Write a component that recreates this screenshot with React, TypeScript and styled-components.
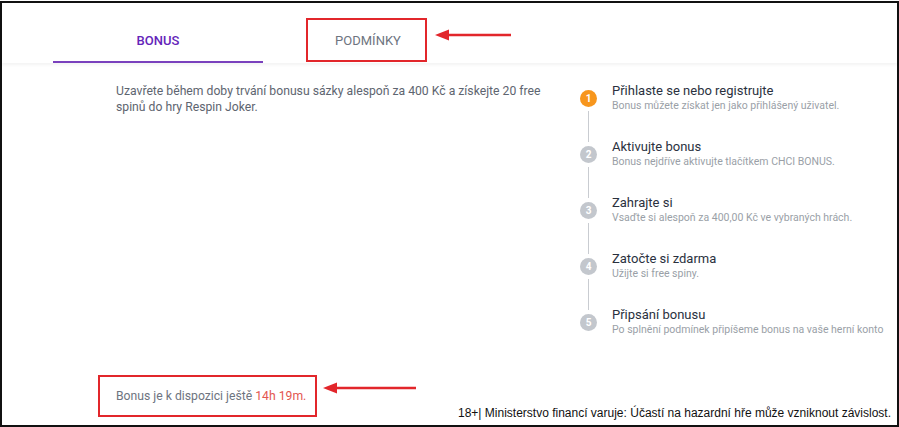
import React from 'react';
import styled, { createGlobalStyle } from 'styled-components';

const GlobalStyle = createGlobalStyle`
  html, body {
    margin: 0;
    padding: 0;
    background: #ffffff;
  }
  body {
    font-family: Roboto, "Noto Sans", Arial, sans-serif;
  }
`;

const RED = '#e2262b';

const Frame = styled.div`
  position: relative;
  box-sizing: border-box;
  width: 899px;
  height: 426px;
  margin-top: 1px;
  border: 2px solid #111;
  background: #fff;
  display: flex;
  flex-direction: column;
`;

const Header = styled.div`
  position: relative;
  z-index: 1;
  display: flex;
  height: 60px;
  padding-left: 51px;
  background: #fff;
  box-shadow: 0 2px 3px rgba(0, 0, 0, 0.05);
`;

const Tab = styled.div<{ $active?: boolean }>`
  box-sizing: border-box;
  width: 210px;
  display: flex;
  align-items: flex-end;
  justify-content: center;
  padding-bottom: 12px;
  font-size: 13px;
  line-height: 16px;
  font-weight: ${(p) => (p.$active ? 500 : 400)};
  text-transform: uppercase;
  color: ${(p) => (p.$active ? '#6424b9' : '#6e7480')};
  border-bottom: 2px solid ${(p) => (p.$active ? '#7a41bd' : 'transparent')};
`;

/* red annotation frame; $inset = how far the frame reaches past its content (t r b l) */
const Callout = styled.span<{ $inset: [number, number, number, number] }>`
  position: relative;
  display: inline-block;
  border: 2px solid ${RED};
  padding: ${(p) => p.$inset.map((v) => `${v - 2}px`).join(' ')};
  margin: ${(p) => p.$inset.map((v) => `${-v}px`).join(' ')};
`;

const ArrowMark = styled.svg<{ $gap: number; $top: number }>`
  position: absolute;
  left: calc(100% + ${(p) => p.$gap}px);
  top: ${(p) => p.$top}px;
  overflow: visible;
`;

const Arrow = ({ length, gap, top }: { length: number; gap: number; top: number }) => (
  <ArrowMark $gap={gap} $top={top} width={length} height={12} viewBox={`0 0 ${length} 12`}>
    <line x1={12} y1={6} x2={length} y2={6} stroke={RED} strokeWidth={2.4} />
    <polygon points="0,6 14,0.5 14,11.5" fill={RED} />
  </ArrowMark>
);

const Body = styled.div`
  flex: 1;
  display: flex;
  padding: 20px 0 21px;
`;

const Main = styled.div`
  box-sizing: border-box;
  width: 578px;
  padding: 0 24px 0 114px;
  display: flex;
  flex-direction: column;
`;

const Intro = styled.p`
  margin: 0;
  font-size: 12.2px;
  line-height: 16px;
  color: #5e6570;
`;

const Expiry = styled.div`
  margin-top: auto;
  font-size: 12.2px;
  line-height: 16px;
  color: #6e7480;
`;

const Time = styled.span`
  color: #e3564f;
`;

const Steps = styled.ol`
  list-style: none;
  margin: 0;
  padding: 0;
  display: flex;
  flex-direction: column;
  gap: 26px;
`;

const Step = styled.li`
  display: grid;
  grid-template-columns: 17px 1fr;
  column-gap: 15px;
  align-items: center;
`;

const Marker = styled.span<{ $current?: boolean; $last?: boolean }>`
  position: relative;
  width: 17px;
  height: 17px;
  border-radius: 50%;
  background: ${(p) => (p.$current ? '#f7961d' : '#c3c7cd')};
  color: #fff;
  font-size: 10px;
  font-weight: 700;
  line-height: 17px;
  text-align: center;

  &::after {
    content: '';
    display: ${(p) => (p.$last ? 'none' : 'block')};
    position: absolute;
    left: 8px;
    top: 21px;
    width: 1px;
    height: 31px;
    background: #c9ccd1;
  }
`;

const StepText = styled.div`
  display: flex;
  flex-direction: column;
`;

const StepTitle = styled.span`
  font-size: 13px;
  line-height: 16px;
  color: #2a313e;
`;

const StepHint = styled.span`
  font-size: 10.5px;
  line-height: 14px;
  color: #9a9fa7;
`;

const Warning = styled.div`
  position: absolute;
  right: 6px;
  bottom: 5px;
  font-family: "Liberation Sans", Arial, sans-serif;
  font-size: 12px;
  line-height: 14px;
  color: #111;
`;

const steps = [
  { title: 'Přihlaste se nebo registrujte', hint: 'Bonus můžete získat jen jako přihlášený uživatel.' },
  { title: 'Aktivujte bonus', hint: 'Bonus nejdříve aktivujte tlačítkem CHCI BONUS.' },
  { title: 'Zahrajte si', hint: 'Vsaďte si alespoň za 400,00 Kč ve vybraných hrách.' },
  { title: 'Zatočte si zdarma', hint: 'Užijte si free spiny.' },
  { title: 'Připsání bonusu', hint: 'Po splnění podmínek připíšeme bonus na vaše herní konto' },
];

const App: React.FC = () => {
  return (
    <>
      <GlobalStyle />
      <Frame>
        <Header>
          <Tab $active>Bonus</Tab>
          <Tab>
            <Callout $inset={[15, 26, 13, 29]}>
              Podmínky
              <Arrow length={76} gap={10} top={9} />
            </Callout>
          </Tab>
        </Header>
        <Body>
          <Main>
            <Intro>
              Uzavřete během doby trvání bonusu sázky alespoň za 400 Kč a získejte 20 free spinů do hry
              Respin Joker.
            </Intro>
            <Expiry>
              <Callout $inset={[13, 11, 13, 18]}>
                Bonus je k dispozici ještě <Time>14h 19m.</Time>
                <Arrow length={93} gap={8} top={5} />
              </Callout>
            </Expiry>
          </Main>
          <Steps>
            {steps.map((s, i) => (
              <Step key={s.title}>
                <Marker $current={i === 0} $last={i === steps.length - 1}>
                  {i + 1}
                </Marker>
                <StepText>
                  <StepTitle>{s.title}</StepTitle>
                  <StepHint>{s.hint}</StepHint>
                </StepText>
              </Step>
            ))}
          </Steps>
        </Body>
        <Warning>18+| Ministerstvo financí varuje: Účastí na hazardní hře může vzniknout závislost.</Warning>
      </Frame>
    </>
  );
};

export default App;
